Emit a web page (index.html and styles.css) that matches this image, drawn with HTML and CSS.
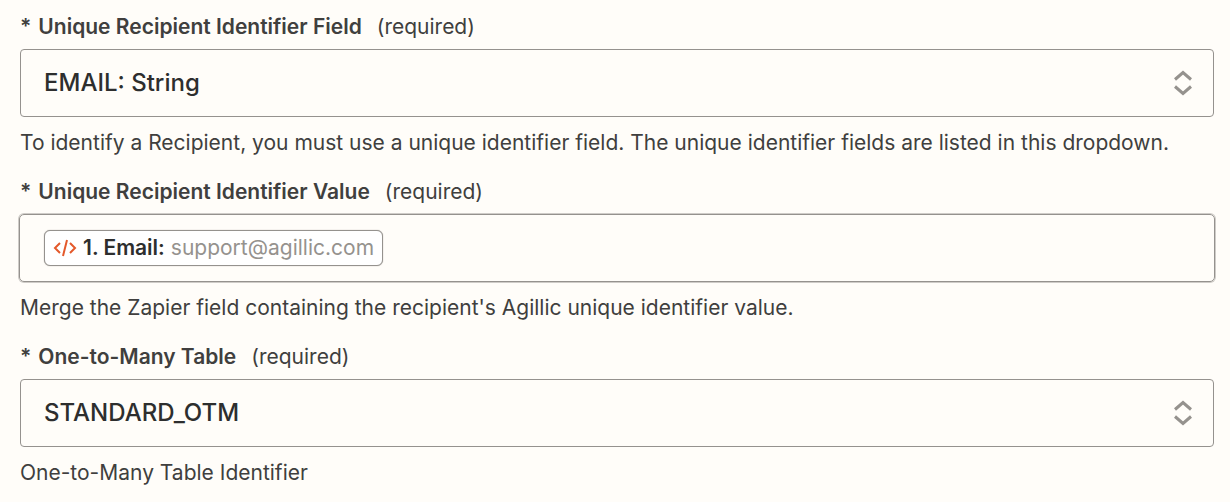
FILE: index.html
```html
<!DOCTYPE html>
<html lang="en">
<head>
    <meta charset="UTF-8">
    <meta name="viewport" content="width=device-width, initial-scale=1.0">
    <title>Recipient fields</title>
    <link rel="stylesheet" href="styles.css">
</head>
<body>
    <form class="fields">
        <div class="field">
            <label for="identifier-field"><span class="star">*</span><strong>Unique Recipient Identifier Field</strong><span>(required)</span></label>
            <div class="select-box">
                <select id="identifier-field" required>
                    <option>EMAIL: String</option>
                </select>
                <svg class="arrows" viewBox="0 0 18 28" aria-hidden="true">
                    <path d="M1 10.500 9 3.500l8 7M1 17.500 9 24.500l8-7"/>
                </svg>
            </div>
            <p class="help">To identify a Recipient, you must use a unique identifier field. The unique identifier fields are listed in this dropdown.</p>
        </div>

        <div class="field">
            <label for="identifier-value"><span class="star">*</span><strong>Unique Recipient Identifier Value</strong><span>(required)</span></label>
            <div class="value-box">
                <span class="pill">
                    <svg class="code" viewBox="0 0 24 18" aria-hidden="true">
                        <path d="M7 4 2 9l5 5M17 4l5 5-5 5M14 1 10 17"/>
                    </svg>
                    <b>1. Email:</b>
                    <span class="sample">support@agillic.com</span>
                </span>
                <input type="text" id="identifier-value">
            </div>
            <p class="help">Merge the Zapier field containing the recipient's Agillic unique identifier value.</p>
        </div>

        <div class="field">
            <label for="otm-table"><span class="star">*</span><strong>One-to-Many Table</strong><span>(required)</span></label>
            <div class="select-box">
                <select id="otm-table" required>
                    <option>STANDARD_OTM</option>
                </select>
                <svg class="arrows" viewBox="0 0 18 28" aria-hidden="true">
                    <path d="M1 10.500 9 3.500l8 7M1 17.500 9 24.500l8-7"/>
                </svg>
            </div>
            <p class="help">One-to-Many Table Identifier</p>
        </div>
    </form>
</body>
</html>
```
FILE: styles.css
```css
* {
    margin: 0;
    padding: 0;
    box-sizing: border-box;
}

body {
    background-color: #fffdf9;
    color: #403f3e;
    font-family: Inter, "Liberation Sans", sans-serif;
    font-size: 21px;
    line-height: 32px;
}

.fields {
    display: flex;
    flex-direction: column;
    gap: 17px;
    padding: 11px 16px 11px 20px;
}

label {
    display: flex;
    gap: 15px;
    margin-bottom: 6px;
}

strong {
    font-weight: 600;
}

.star {
    margin-right: -8px;
    font-weight: 600;
}

.select-box {
    display: grid;
    align-items: center;
}

.select-box > * {
    grid-area: 1 / 1;
}

select {
    width: 100%;
    height: 68px;
    padding: 0 60px 2px 23px;
    appearance: none;
    background: transparent;
    border: 1px solid #95928e;
    border-radius: 4px;
    color: #2d2e2e;
    font-family: inherit;
    font-size: 24px;
    font-weight: 500;
}

.arrows {
    justify-self: end;
    width: 18px;
    height: 28px;
    margin-right: 22px;
    fill: none;
    stroke: #95928e;
    stroke-width: 3;
    pointer-events: none;
}

.value-box {
    display: flex;
    align-items: center;
    gap: 8px;
    height: 68px;
    margin: 0 -1px;
    padding: 0 24px;
    border: 1px solid #95928e;
    border-radius: 5px;
    box-shadow: 0 0 0 1px #cfccc8;
}

.pill {
    display: flex;
    align-items: center;
    gap: 6px;
    height: 36px;
    padding: 0 8px;
    background: #fff;
    border: 1px solid #95928e;
    border-radius: 6px;
    box-shadow: 0 0 1px #95928e;
    color: #2d2e2e;
    white-space: nowrap;
}

.pill b {
    font-weight: 600;
}

.sample {
    color: #95928e;
}

.code {
    width: 24px;
    height: 18px;
    fill: none;
    stroke: #e4592b;
    stroke-width: 2;
}

input {
    flex: 1;
    min-width: 0;
    height: 36px;
    background: transparent;
    border: none;
    outline: none;
    color: #2d2e2e;
    font: inherit;
}

.help {
    margin-top: 10px;
}
```
